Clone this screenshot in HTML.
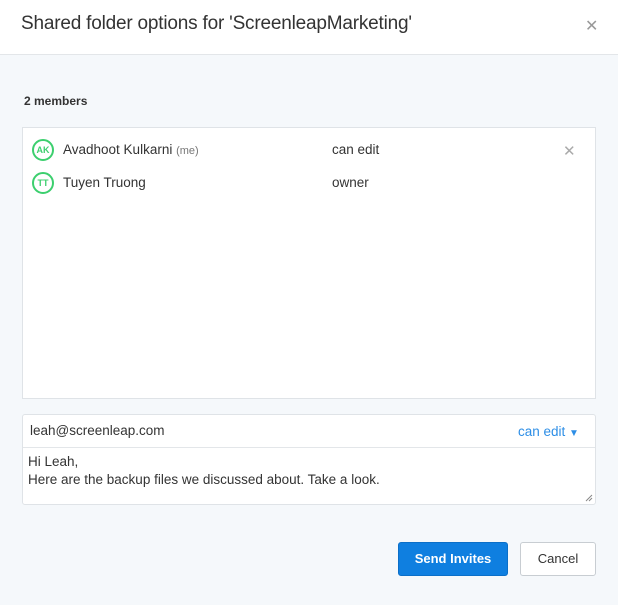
<!DOCTYPE html>
<html><head><style>
*{box-sizing:border-box;margin:0;padding:0}
body{width:618px;height:605px;background:#f5f8fb;font-family:"Liberation Sans",sans-serif;color:#333;position:relative;overflow:hidden}
.hdr{position:absolute;left:0;top:0;width:618px;height:55px;background:#fff;border-bottom:1px solid #e3e6e9}
.t{position:absolute;left:21px;top:13px;font-size:19px;color:#333;letter-spacing:-0.2px}
.x{position:absolute;left:585px;top:16px;font-size:16px;color:#999}
.mem{position:absolute;left:24px;top:94px;font-size:12px;font-weight:bold;color:#333}
.box{position:absolute;left:22px;top:127px;width:574px;height:272px;background:#fff;border:1px solid #dfe3e7}
.av{position:absolute;width:22px;height:22px;border:2px solid #3ccf6e;border-radius:50%;color:#3ccf6e;font-size:9px;font-weight:bold;text-align:center;line-height:18px}
.n{position:absolute;font-size:13.5px;color:#333}
.inp{position:absolute;left:22px;top:414px;width:574px;height:91px;background:#fff;border:1px solid #dfe3e7;border-radius:3px}
.line{position:absolute;left:0;top:32px;width:100%;height:1px;background:#e3e6e9}
.btn{position:absolute;top:542px;height:34px;border-radius:3px;font-size:13px;font-weight:bold;text-align:center;line-height:32px}
</style></head><body>
<div class="hdr"><div class="t">Shared folder options for 'ScreenleapMarketing'</div><div class="x">✕</div></div>
<div class="mem">2 members</div>
<div class="box">
<div class="av" style="left:9px;top:11px">AK</div>
<div class="n" style="left:40px;top:14px">Avadhoot Kulkarni <span style="font-size:11px;color:#777">(me)</span></div>
<div class="n" style="left:309px;top:14px">can edit</div>
<div class="n" style="left:540px;top:14px;color:#aaa;font-size:15px">✕</div>
<div class="av" style="left:9px;top:44px">TT</div>
<div class="n" style="left:40px;top:47px">Tuyen Truong</div>
<div class="n" style="left:309px;top:47px">owner</div>
</div>
<div class="inp">
<div class="n" style="left:7px;top:8px">leah@screenleap.com</div>
<div class="n" style="left:495px;top:9px;color:#2d8ee6">can edit <span style="font-size:10px">▼</span></div>
<div class="line"></div>
<div class="n" style="left:5px;top:38px;line-height:18px">Hi Leah,<br>Here are the backup files we discussed about. Take a look.</div>
<svg style="position:absolute;right:2px;bottom:2px" width="8" height="8"><path d="M1 7L7 1M4 7L7 4" stroke="#888" stroke-width="1"/></svg>
</div>
<div class="btn" style="left:398px;width:110px;background:#0f7fe0;color:#fff;border:1px solid #0b6fc8">Send Invites</div>
<div class="btn" style="left:520px;width:76px;background:#fff;color:#333;border:1px solid #c8cdd2;font-weight:normal">Cancel</div>
</body></html>
